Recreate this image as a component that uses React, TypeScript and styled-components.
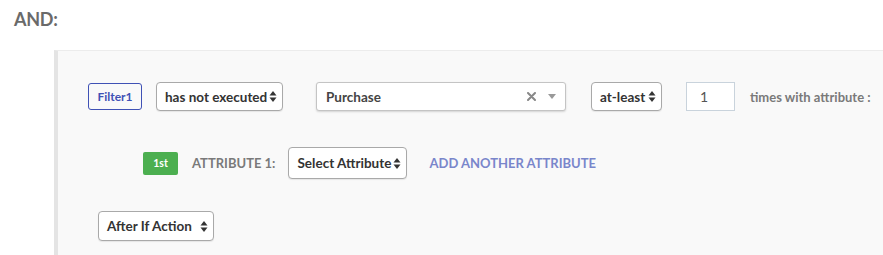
import React from "react";
import styled, { createGlobalStyle } from "styled-components";

const Global = createGlobalStyle`
  html, body { margin: 0; padding: 0; background: #fff; }
  body { font-family: Lato, "Open Sans", sans-serif; overflow: hidden; }
`;

const Page = styled.div`
  width: 883px;
  height: 255px;
  overflow: hidden;
`;

const Heading = styled.div`
  padding: 8px 0 0 14px;
  height: 50px;
  box-sizing: border-box;
  font-size: 18px;
  font-weight: 700;
  letter-spacing: -0.3px;
  color: #6a6a6a;
`;

const Panel = styled.div`
  margin-left: 54px;
  height: 205px;
  background: #f9f9f9;
  border-left: 4px solid #e4e4e4;
  border-top: 1px solid #ececec;
  padding: 31px 0 0 0;
  box-sizing: border-box;
`;

const Row = styled.div<{ $indent: number; $mt?: number }>`
  display: flex;
  align-items: center;
  margin-left: ${(p) => p.$indent}px;
  margin-top: ${(p) => p.$mt ?? 0}px;
  white-space: nowrap;
`;

const FilterTag = styled.div`
  width: 54px;
  height: 27px;
  box-sizing: border-box;
  border: 1px solid #3f51b5;
  border-radius: 3px;
  color: #3f51b5;
  font-size: 12px;
  font-weight: 700;
  display: flex;
  align-items: center;
  justify-content: center;
`;

const SelectBox = styled.div<{ $w: number; $h?: number; $ml: number }>`
  width: ${(p) => p.$w}px;
  height: ${(p) => p.$h ?? 29}px;
  margin-left: ${(p) => p.$ml}px;
  box-sizing: border-box;
  background: #fff;
  border: 1px solid #a9a9a9;
  border-radius: 4px;
  box-shadow: 0 1px 1px rgba(0, 0, 0, 0.08);
  display: flex;
  align-items: center;
  justify-content: space-between;
  padding: 0 5px 0 8px;
  font-size: 13.5px;
  font-weight: 700;
  color: #333;
`;

const Combo = styled.div`
  width: 250px;
  height: 29px;
  margin-left: 33px;
  box-sizing: border-box;
  background: #fff;
  border: 1px solid #c4c4c4;
  border-radius: 3px;
  box-shadow: 0 1px 2px rgba(0, 0, 0, 0.15);
  display: flex;
  align-items: center;
  padding: 0 9px 0 9px;
  font-size: 13.5px;
  font-weight: 700;
  color: #444;
`;

const ComboText = styled.span`
  flex: 1;
`;

const ClearIcon = styled.svg`
  margin-right: 12px;
`;

const NumInput = styled.div`
  width: 49px;
  height: 29px;
  margin-left: 24px;
  box-sizing: border-box;
  background: #fff;
  border: 1px solid #c9d3dc;
  display: flex;
  align-items: center;
  padding-left: 13px;
  font-size: 14px;
  color: #555;
`;

const Label = styled.span<{ $ml: number }>`
  margin-left: ${(p) => p.$ml}px;
  font-size: 13px;
  font-weight: 700;
  color: #7a7a7a;
`;

const OrdBadge = styled.div`
  width: 35px;
  height: 23px;
  background: #4caf50;
  border-radius: 2px;
  color: #fff;
  font-size: 10.5px;
  font-weight: 700;
  display: flex;
  align-items: center;
  justify-content: center;
`;

const LinkText = styled.span`
  margin-left: 22px;
  font-size: 13px;
  font-weight: 700;
  color: #7986cb;
`;

const Arrows = () => (
  <svg width="8" height="13" viewBox="0 0 8 13">
    <path d="M4 1 L7.5 5.5 H0.5 Z" fill="#333" />
    <path d="M4 12 L7.5 7.5 H0.5 Z" fill="#333" />
  </svg>
);

const Caret = () => (
  <svg width="8" height="6" viewBox="0 0 8 6">
    <path d="M0 0 H8 L4 5 Z" fill="#999" />
  </svg>
);

const Cross = () => (
  <ClearIcon width="9" height="9" viewBox="0 0 9 9">
    <path d="M1 1 L8 8 M8 1 L1 8" stroke="#888" strokeWidth="2" strokeLinecap="round" />
  </ClearIcon>
);

export default function App() {
  return (
    <Page>
      <Global />
      <Heading>AND:</Heading>
      <Panel>
        <Row $indent={30}>
          <FilterTag>Filter1</FilterTag>
          <SelectBox $w={127} $ml={14}>
            has not executed <Arrows />
          </SelectBox>
          <Combo>
            <ComboText>Purchase</ComboText>
            <Cross />
            <Caret />
          </Combo>
          <SelectBox $w={71} $ml={25}>
            at-least <Arrows />
          </SelectBox>
          <NumInput>1</NumInput>
          <Label $ml={15}>times with attribute :</Label>
        </Row>
        <Row $indent={85} $mt={36}>
          <OrdBadge>1st</OrdBadge>
          <Label $ml={14}>ATTRIBUTE 1:</Label>
          <SelectBox $w={119} $h={32} $ml={13}>
            Select Attribute <Arrows />
          </SelectBox>
          <LinkText>ADD ANOTHER ATTRIBUTE</LinkText>
        </Row>
        <Row $indent={40} $mt={32}>
          <SelectBox $w={116} $h={30} $ml={0}>
            After If Action <Arrows />
          </SelectBox>
        </Row>
      </Panel>
    </Page>
  );
}
